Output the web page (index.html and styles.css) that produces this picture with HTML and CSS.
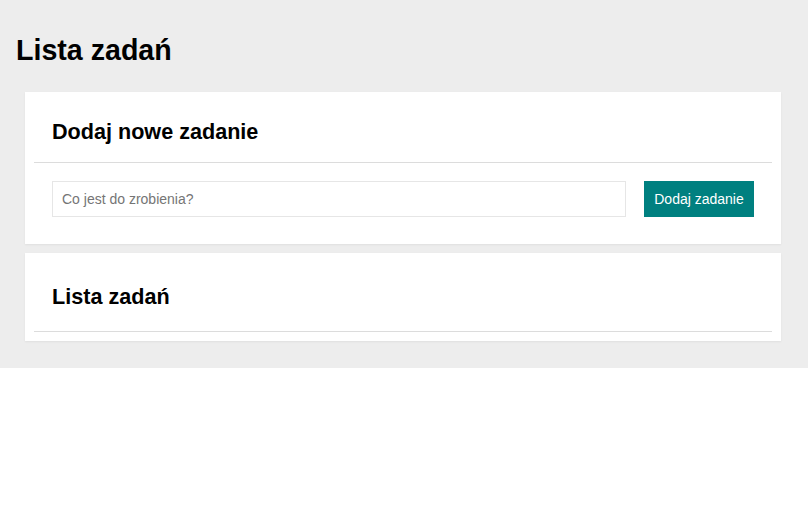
FILE: index.html
```html
<!DOCTYPE html>
<html lang="pl">
<head>
<meta charset="utf-8">
<title>Lista zadań</title>
<link rel="stylesheet" href="styles.css">
</head>
<body>
<div class="app">
  <h1 class="app-title">Lista zadań</h1>
  <div class="cards">
    <section class="card">
      <div class="card-header">
        <h2 class="card-title">Dodaj nowe zadanie</h2>
      </div>
      <form class="card-body add-form" onsubmit="return false;">
        <input class="task-input" type="text" placeholder="Co jest do zrobienia?">
        <button class="add-btn" type="submit">Dodaj zadanie</button>
      </form>
    </section>
    <section class="card">
      <div class="card-header card-header--tall">
        <h2 class="card-title">Lista zadań</h2>
      </div>
      <ul class="task-list"></ul>
    </section>
  </div>
</div>
</body>
</html>
```

FILE: styles.css
```css
html, body {
  margin: 0;
  padding: 0;
  background: #ffffff;
  font-family: "Liberation Sans", Arial, sans-serif;
  color: #000;
}

.app {
  background: #ededed;
  padding: 34px 15px 27px;
}

.app-title {
  margin: 0 0 26px 1px;
  font-size: 28.6px;
  font-weight: bold;
  line-height: 32px;
}

.cards {
  display: flex;
  flex-direction: column;
  gap: 9px;
  margin: 0 12px 0 10px;
}

.card {
  background: #fff;
  padding: 9px;
  box-shadow: 0 1px 2px rgba(0, 0, 0, 0.06);
}

.card-header {
  padding: 18px;
  border-bottom: 1px solid #dcdcdc;
  display: flex;
  align-items: center;
}

.card-header--tall {
  min-height: 33px;
}

.card-title {
  margin: 0;
  font-size: 21.6px;
  font-weight: bold;
  line-height: 25px;
}

.card-body {
  padding: 18px;
}

.add-form {
  display: flex;
  gap: 18px;
}

.task-input {
  flex: 1;
  height: 36px;
  box-sizing: border-box;
  border: 1px solid #e6e6e6;
  padding: 0 9px;
  font-family: "Liberation Sans", Arial, sans-serif;
  font-size: 14px;
  color: #333;
  outline: none;
}

.task-input::placeholder {
  color: #757575;
}

.add-btn {
  width: 110px;
  height: 36px;
  border: none;
  background: #008080;
  color: #fff;
  font-family: "Liberation Sans", Arial, sans-serif;
  font-size: 14px;
  padding: 0 9px;
  cursor: pointer;
}

.task-list {
  list-style: none;
  margin: 0;
  padding: 0;
}
```
